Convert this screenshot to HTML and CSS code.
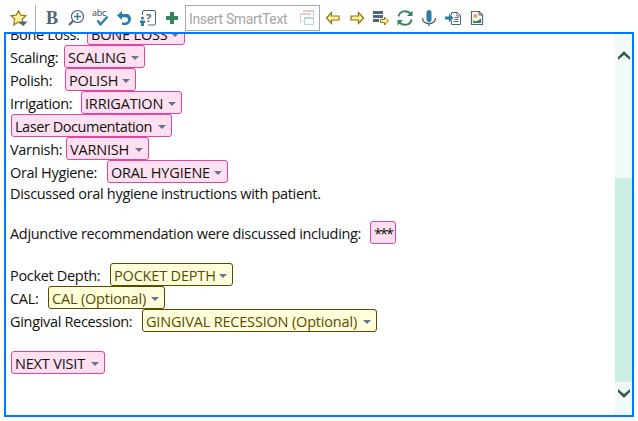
FILE: index.html
```html
<!DOCTYPE html>
<html lang="en">
<head>
<meta charset="utf-8">
<title>Note editor</title>
<link rel="stylesheet" href="styles.css">
</head>
<body>
<div class="toolbar">
  <button class="tool star"><svg viewBox="0 0 24 24"><path d="M11.500 4.700 13.800 9.200 19 9.800 15.300 13.200 16.400 18.800 11.500 16.200 6.700 18.800 7.700 13.200 4.100 9.800 9.200 9.200Z" fill="#fff09c" stroke="#9a7b16" stroke-width="1.200"/><path d="M12 15.500h8.500L16.200 20Z" fill="#52647a"/></svg></button>
  <span class="divider"></span>
  <button class="tool bold">B</button>
  <button class="tool"><svg viewBox="0 0 24 24" fill="none"><circle cx="13.500" cy="10.500" r="6" stroke="#52647a" stroke-width="1.200"/><path d="M9 15 5 19" stroke="#52647a" stroke-width="2.200"/><path d="M13.500 7v7M10 10.500h7" stroke="#2c7da8" stroke-width="1.500"/></svg></button>
  <button class="tool spell"><span>abc</span><svg viewBox="0 0 24 24" fill="none"><path d="m9.500 14.500 3 4 7-8" stroke="#2c7da8" stroke-width="2.300"/></svg></button>
  <button class="tool"><svg viewBox="0 0 24 24"><path d="M5 9.500 10 5v3h4.500C21 8 20.500 19 13 19h-3v-2.500h3c4 0 4-5.300.5-5.300H10V14Z" fill="#2c7da8"/></svg></button>
  <button class="tool help"><svg viewBox="0 0 24 24" fill="none"><path d="M6.500 9V6Q6.500 4.500 8 4.500h10q1.500 0 1.500 1.500v11.500q0 1.500-1.500 1.500h-6" stroke="#52647a"/><circle cx="6.500" cy="12" r="1.500" fill="#2c7da8"/><path d="M4 14.500h5V17H8v3H5v-3H4Z" fill="#2c7da8"/></svg><span>?</span></button>
  <button class="tool"><svg viewBox="0 0 24 24"><path d="M10 6h4v4h4v4h-4v4h-4v-4H6v-4h4Z" fill="#34855b"/></svg></button>
  <div class="smart"><span>Insert SmartText</span><svg class="windows" viewBox="0 0 16 16" fill="none"><path d="M3 1.500h10.500V6" stroke="#c3d9cb"/><path d="M3 1h11" stroke="#c3d9cb" stroke-width="2"/><path d="M3 11.500H.5V4.500h10" stroke="#efc9c4"/><path d="M0 4h11" stroke="#efc9c4" stroke-width="2"/><path d="M4.500 7.500h9v7h-9Z" fill="#fff" stroke="#b8d4e3"/><path d="M4 8h10" stroke="#b8d4e3" stroke-width="2"/></svg></div>
  <button class="tool"><svg viewBox="0 0 24 24"><path d="m5.500 12 5-5.500V10H18v4h-7.500v3.500Z" fill="#fff09c" stroke="#8e7316" stroke-width="1.200"/></svg></button>
  <button class="tool"><svg viewBox="0 0 24 24"><path d="m18.500 12-5-5.500V10H6v4h7.500v3.500Z" fill="#fff09c" stroke="#8e7316" stroke-width="1.200"/></svg></button>
  <button class="tool"><svg viewBox="0 0 24 24"><path d="M4 5h10v3H4zM4 9h10v3H4zM4 13h6v3H4z" fill="#52647a"/><path d="m19.500 15-4-4v2.500H11.500v3h4V19Z" fill="#fff09c" stroke="#8e7316"/></svg></button>
  <button class="tool"><svg viewBox="0 0 24 24" fill="none" stroke="#34855b" stroke-width="1.900"><path d="M5.500 10.500C6.500 4.500 14 3.500 18 8M18.500 13.500C17.500 19.500 10 20.500 6 16"/><path d="M19.500 4.500V10H14ZM4.500 19.500V14H10Z" fill="#34855b" stroke="none"/></svg></button>
  <button class="tool"><svg viewBox="0 0 24 24" fill="none"><rect x="9.500" y="4" width="5" height="12" rx="2.500" fill="#2c7da8"/><path d="M5.500 12c0 7.300 13 7.300 13 0M12 17v3" stroke="#52647a" stroke-width="1.400"/></svg></button>
  <button class="tool"><svg viewBox="0 0 24 24" fill="none"><path d="M10.500 9V6.500h6l3 3v9h-9V15" stroke="#52647a"/><path d="M16 6.500V10h3.500M13.500 11.500h4M13.500 13.500h4M12.500 15.500h5" stroke="#52647a"/><path d="M4 10.500h4V7.500l4.500 4.500L8 16.500v-3H4Z" fill="#2c7da8"/></svg></button>
  <button class="tool"><svg viewBox="0 0 24 24" fill="none"><path d="M6.500 5.500H14L17.500 9v9.500h-11Z" stroke="#52647a" stroke-width="1.200"/><path d="M14 5v4h4" stroke="#52647a"/><circle cx="10.500" cy="10" r="2" fill="#f4a04b"/><path d="M8 14l2 1.500 3-1 3-2V17H8Z" fill="#34855b"/></svg></button>
</div>
<div class="editor">
  <div class="note">
    <div class="row"><span class="label w77">Bone Loss:</span><span class="chip c98">BONE LOSS<i></i></span></div>
    <div class="row"><span class="label w54">Scaling:</span><span class="chip c81">SCALING<i></i></span></div>
    <div class="row"><span class="label w55">Polish:</span><span class="chip c71">POLISH<i></i></span></div>
    <div class="row"><span class="label w71">Irrigation:</span><span class="chip c101">IRRIGATION<i></i></span></div>
    <div class="row"><span class="label w1"></span><span class="chip mixed c161">Laser Documentation<i></i></span></div>
    <div class="row"><span class="label w56">Varnish:</span><span class="chip c83">VARNISH<i></i></span></div>
    <div class="row"><span class="label w97">Oral Hygiene:</span><span class="chip c121">ORAL HYGIENE<i></i></span></div>
    <div class="row plain">Discussed oral hygiene instructions with patient.</div>
    <div class="row plain"></div>
    <div class="row"><span class="label w360">Adjunctive recommendation were discussed including:</span><span class="chip mixed stars c26">***</span></div>
    <div class="row plain"></div>
    <div class="row"><span class="label w100">Pocket Depth:</span><span class="chip optional c123">POCKET DEPTH<i></i></span></div>
    <div class="row"><span class="label w38">CAL:</span><span class="chip optional c117">CAL (Optional)<i></i></span></div>
    <div class="row"><span class="label w132">Gingival Recession:</span><span class="chip optional c235">GINGIVAL RECESSION (Optional)<i></i></span></div>
    <div class="row plain"></div>
    <div class="row"><span class="label w1"></span><span class="chip c94">NEXT VISIT<i></i></span></div>
  </div>
  <div class="scrollbar">
    <svg class="cap up" viewBox="0 0 12 10"><path d="M0 9V6l6-6 6 6v3L6 4Z"/></svg>
    <div class="thumb"></div>
    <svg class="cap" viewBox="0 0 12 10"><path d="M0 0v3l6 6 6-6V0L6 5Z"/></svg>
  </div>
</div>
</body>
</html>
```
FILE: styles.css
```css
* { box-sizing: border-box; }
body { margin: 0; width: 638px; height: 421px; background: #fff; overflow: hidden; }
.toolbar { display: flex; height: 32px; padding: 0 0 0 7px; align-items: flex-start; }
.tool { flex: none; width: 24px; height: 24px; margin: 6px 0 0; padding: 0; border: 0; background: none; position: relative; color: #52647a; }
.tool svg { display: block; width: 24px; height: 24px; }
.star { margin-right: 4px; }
.divider { width: 1px; height: 27px; margin: 5px 4px 0 0; background: #b1b1b1; }
.bold { font: bold 18px/24px "Liberation Serif", serif; }
.spell span { position: absolute; left: 4px; top: 1px; font: 9px/12px "Open Sans", sans-serif; letter-spacing: -.2px; color: #34485e; }
.help span { position: absolute; left: 10px; top: 4px; font: bold 11px/15px "Open Sans", sans-serif; }
.smart { flex: none; display: flex; justify-content: space-between; width: 135px; height: 26px; margin: 5px 1px 0; padding: 0 3px; border: 1px solid #a8a8a8; color: #a6a6a6; font: 14px/26px Roboto, sans-serif; letter-spacing: -.35px; }
.windows { width: 16px; height: 16px; margin-top: 4px; }
.editor { display: flex; width: 630px; height: 385px; margin-left: 4px; border: 2px solid #007aff; overflow: hidden; }
.note { flex: 1; padding-left: 4px; margin-top: -12px; color: #111; font: 14.5px/21px "Open Sans", sans-serif; letter-spacing: -.32px; white-space: nowrap; }
.row { display: flex; height: 23px; }
.row.plain { height: 19px; line-height: 21px; }
.label { flex: none; line-height: 25px; }
.chip { flex: none; display: flex; justify-content: space-between; align-items: center; height: 23px; padding: 1px 5px 0 3px; border: 1px solid #e543a0; border-radius: 3px; background: #ffe0f0; letter-spacing: -.18px; }
.chip.mixed { letter-spacing: -.45px; }
.chip.stars { letter-spacing: -2px; }
.chip.optional { border-color: #5a4a00; background: #ffffdc; color: #5a4a00; }
.chip i { width: 0; height: 0; border: 4px solid transparent; border-top-color: #66738c; border-bottom: 0; margin-top: 1px; }
.w1 { width: 1px; } .w38 { width: 38px; } .w54 { width: 54px; } .w55 { width: 55px; } .w56 { width: 56px; }
.w71 { width: 71px; } .w77 { width: 77px; } .w97 { width: 97px; } .w100 { width: 100px; } .w132 { width: 132px; } .w360 { width: 360px; }
.c26 { width: 26px; } .c71 { width: 71px; } .c81 { width: 81px; } .c83 { width: 83px; } .c94 { width: 94px; } .c98 { width: 98px; }
.c101 { width: 101px; } .c117 { width: 117px; } .c121 { width: 121px; } .c123 { width: 123px; } .c161 { width: 161px; } .c235 { width: 235px; }
.scrollbar { flex: none; display: flex; flex-direction: column; align-items: center; width: 17px; background: #f0faf7; }
.cap { width: 12px; height: 10px; margin-top: 7px; fill: #3c5a55; }
.cap.up { margin: 17px 0 117px; }
.thumb { width: 17px; height: 204px; background: #cdece4; }
```
